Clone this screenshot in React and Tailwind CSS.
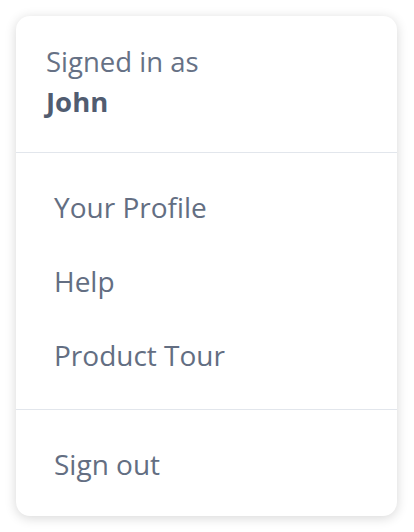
import React from 'react';

const items = ['Your Profile', 'Help', 'Product Tour'];

const App = () => {
  return (
    <div className="w-[414px] h-[532px] bg-white p-4" style={{ fontFamily: '"Open Sans", sans-serif' }}>
      <div className="w-[381px] h-[500px] bg-white rounded-[14px] shadow-[0_2px_12px_rgba(0,0,0,0.16)] flex flex-col">
        <div className="px-[30px] pt-[26px] pb-[30px] text-[27.5px] leading-[40px] text-[#667185]">
          <p>Signed in as</p>
          <p className="font-bold text-[#515c70]">John</p>
        </div>

        <div className="border-t border-[#e2e6ec] py-[17px]">
          {items.map((label) => (
            <a key={label} href="#" className="h-[74px] flex items-center px-[38px] text-[28px] leading-[40px] text-[#636e82]">
              {label}
            </a>
          ))}
        </div>

        <div className="border-t border-[#e2e6ec] py-[17px]">
          <a href="#" className="h-[74px] flex items-center px-[38px] text-[28px] leading-[40px] text-[#636e82]">
            Sign out
          </a>
        </div>
      </div>
    </div>
  );
};

export default App;
